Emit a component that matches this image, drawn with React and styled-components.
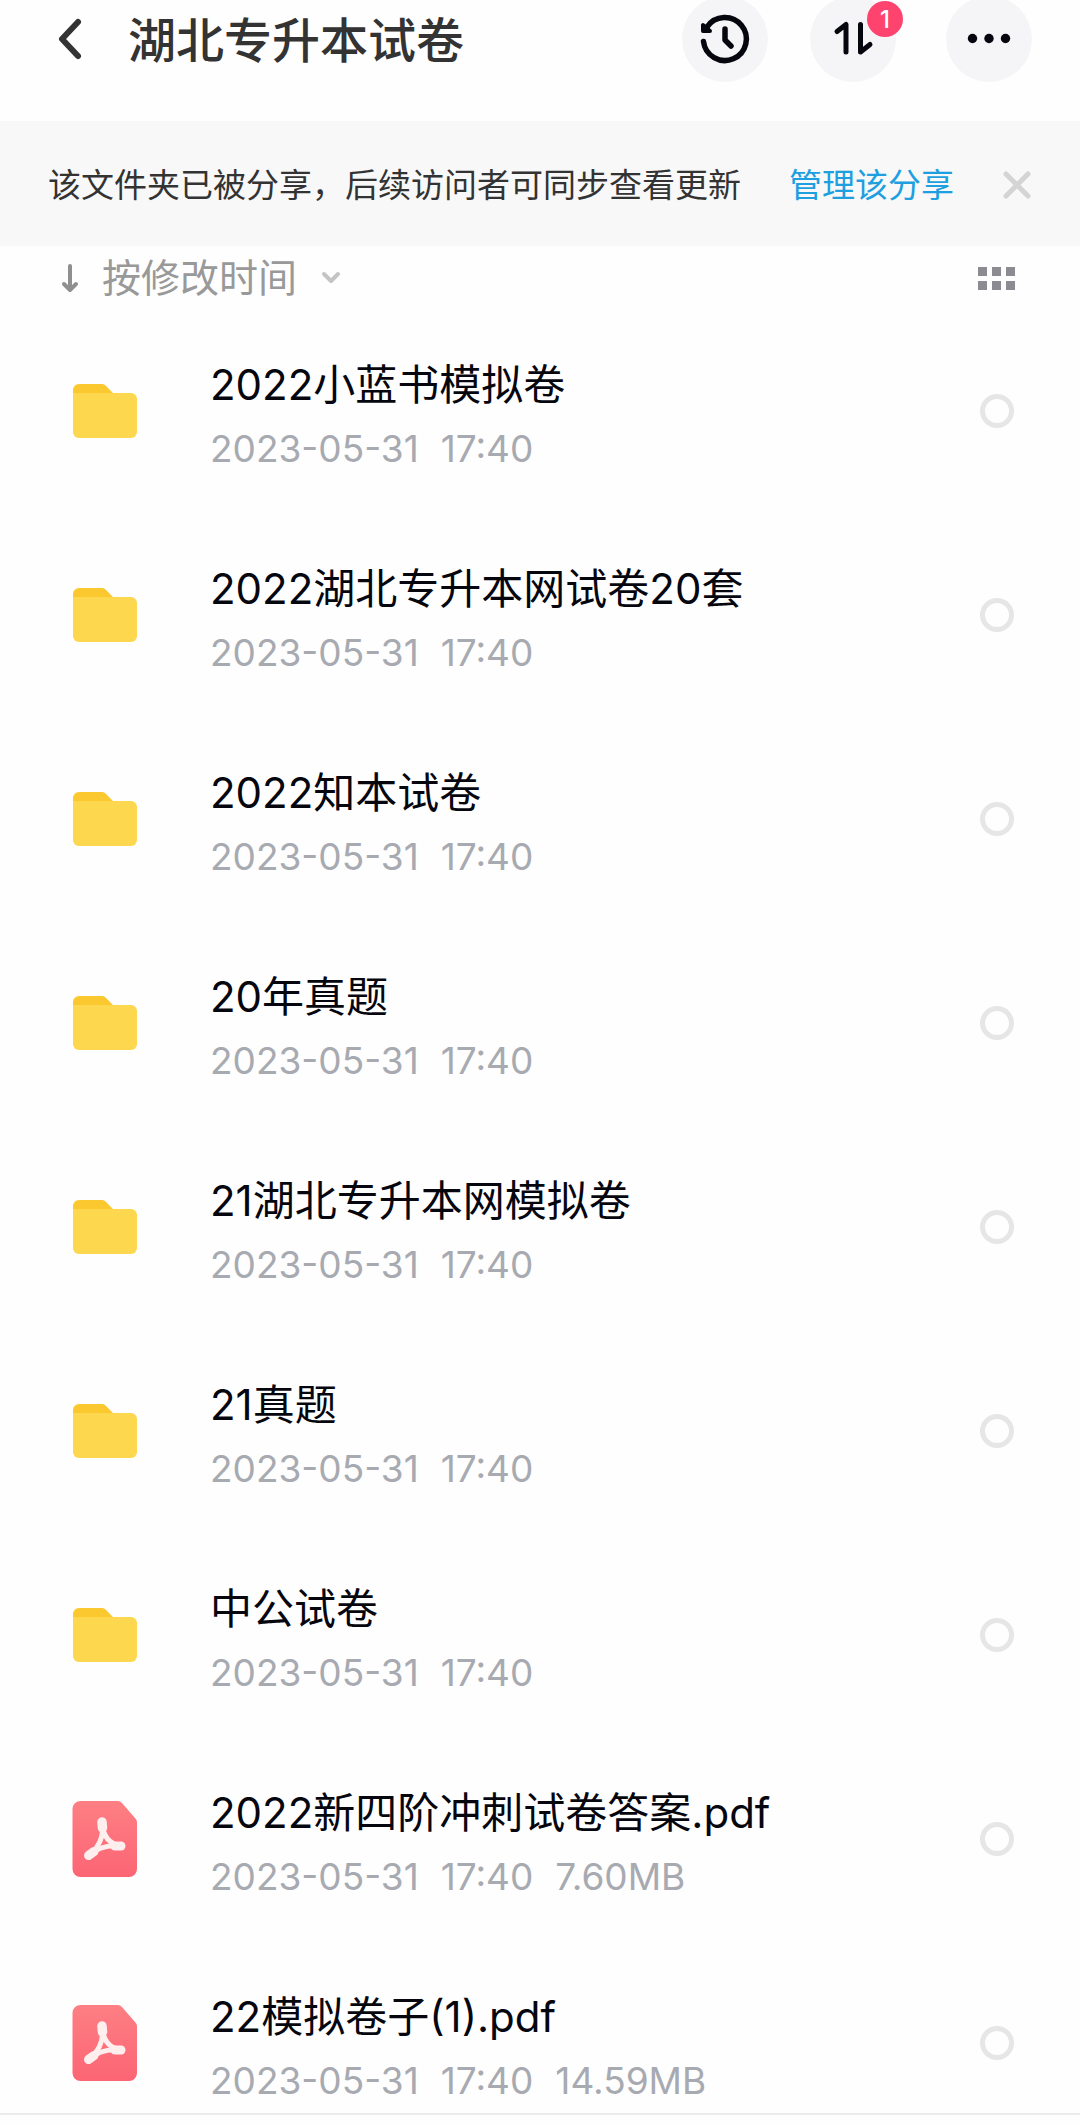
import React, { useState } from "react";
import styled, { createGlobalStyle } from "styled-components";

const files = [
  { id: 1, type: "folder", name: "2022小蓝书模拟卷", date: "2023-05-31", time: "17:40" },
  { id: 2, type: "folder", name: "2022湖北专升本网试卷20套", date: "2023-05-31", time: "17:40" },
  { id: 3, type: "folder", name: "2022知本试卷", date: "2023-05-31", time: "17:40" },
  { id: 4, type: "folder", name: "20年真题", date: "2023-05-31", time: "17:40" },
  { id: 5, type: "folder", name: "21湖北专升本网模拟卷", date: "2023-05-31", time: "17:40" },
  { id: 6, type: "folder", name: "21真题", date: "2023-05-31", time: "17:40" },
  { id: 7, type: "folder", name: "中公试卷", date: "2023-05-31", time: "17:40" },
  { id: 8, type: "pdf", name: "2022新四阶冲刺试卷答案.pdf", date: "2023-05-31", time: "17:40", size: "7.60MB" },
  { id: 9, type: "pdf", name: "22模拟卷子(1).pdf", date: "2023-05-31", time: "17:40", size: "14.59MB" },
];

const GlobalStyle = createGlobalStyle`
  * {
    box-sizing: border-box;
  }

  body {
    margin: 0;
    background: #fefefe;
    font-family: Inter, "Noto Sans CJK SC", sans-serif;
  }

  button {
    padding: 0;
    border: 0;
    background: none;
    font: inherit;
    color: inherit;
    cursor: pointer;
  }

  svg {
    display: block;
  }
`;

const Page = styled.div`
  overflow: hidden;
`;

const Header = styled.header`
  display: flex;
  align-items: center;
  margin-top: -4px;
  padding: 0 48px 39px 56px;
`;

const BackButton = styled.button`
  width: 28px;
  margin-right: 44px;
`;

const Title = styled.h1`
  flex: 1;
  margin: 0;
  padding-top: 4px;
  font-size: 48px;
  font-weight: 500;
  line-height: 60px;
  color: #333;
`;

const Actions = styled.div`
  display: flex;
  gap: 42px;
  margin-right: 50px;
`;

const RoundButton = styled.button`
  position: relative;
  width: 86px;
  height: 86px;
  border-radius: 50%;
  background: #f5f5f7;
  color: #06060f;
`;

const Badge = styled.span`
  position: absolute;
  top: 5px;
  right: -7px;
  width: 36px;
  height: 36px;
  border-radius: 50%;
  background: #ff436f;
  color: #fff;
  font-size: 24px;
  font-weight: 500;
  line-height: 38px;
  text-align: center;
`;

const Notice = styled.section`
  display: flex;
  align-items: center;
  height: 125px;
  padding: 2px 48px 0;
  background: #f8f8f8;
  font-size: 33px;
  line-height: 48px;
`;

const NoticeText = styled.p`
  margin: 0;
  color: #333;
`;

const NoticeLink = styled.a`
  flex: 1;
  margin-left: 48px;
  color: #1e9fdf;
  text-decoration: none;
`;

const SortBar = styled.div`
  display: flex;
  align-items: center;
  justify-content: space-between;
  height: 64px;
  padding: 0 65px 0 60px;
`;

const SortButton = styled.button`
  display: flex;
  align-items: center;
  color: #999;
  font-size: 39px;
  line-height: 48px;

  span {
    margin: 0 24px 0 22px;
  }
`;

const List = styled.ul`
  display: flex;
  flex-direction: column;
  gap: 64px;
  margin: 0;
  padding: 31px 66px 0 72px;
  border-bottom: 2px solid #ebebeb;
  list-style: none;
`;

const Row = styled.label`
  display: flex;
  align-items: center;
  height: 140px;
  cursor: pointer;
`;

const Info = styled.div`
  flex: 1;
  margin-left: 72px;
  padding-top: 12px;
`;

const Name = styled.div`
  color: #06060f;
  font-size: 42px;
  line-height: 64px;
`;

const Meta = styled.div`
  display: flex;
  gap: 22px;
  color: #a8aab1;
  font-size: 37px;
  line-height: 64px;
`;

const Check = styled.input`
  appearance: none;
  width: 34px;
  height: 34px;
  margin: 0;
  border: 5px solid #e6e6e6;
  border-radius: 50%;

  &:checked {
    border-color: #1e9fdf;
    background: #1e9fdf;
  }
`;

const FolderIcon = () => (
  <svg width="66" height="56" viewBox="0 0 66 56" aria-hidden="true">
    <path d="M1 7a6 6 0 0 1 6-6h22c4 0 5 2 7 4l5 5v12H1Z" fill="#fbc82f" />
    <path d="M1 10h58a6 6 0 0 1 6 6v33a6 6 0 0 1-6 6H7a6 6 0 0 1-6-6Z" fill="#fdd84e" />
  </svg>
);

const PdfIcon = () => (
  <svg width="66" height="76" viewBox="0 0 66 76" aria-hidden="true">
    <defs>
      <linearGradient id="pdf" x1="0" y1="0" x2="0" y2="1">
        <stop offset="0" stopColor="#fd7f84" />
        <stop offset="1" stopColor="#fc6574" />
      </linearGradient>
    </defs>
    <path d="M8 0h38q2 0 4 2l13 15q2 2 2 4v47a8 8 0 0 1-8 8H8.500a8 8 0 0 1-8-8V8a8 8 0 0 1 8-8Z" fill="url(#pdf)" />
    <g fill="none" stroke="#ffeeee" strokeLinecap="round" strokeLinejoin="round">
      <path d="M30 22C32 33 29 44 17 55" strokeWidth="5" />
      <path d="M30 22C31 34 36 43 49 45" strokeWidth="5" />
      <path d="M17 55C25 46 36 44 49 45" strokeWidth="5" />
      <path d="M30 21l.5 6" strokeWidth="9.500" />
      <path d="M16.500 54.500l5.500-4" strokeWidth="9" />
      <path d="M43 45h6" strokeWidth="9" />
    </g>
  </svg>
);

const App = () => {
  const [selected, setSelected] = useState([]);
  const [showNotice, setShowNotice] = useState(true);

  const toggle = (id) => {
    setSelected((prev) =>
      prev.includes(id) ? prev.filter((v) => v !== id) : [...prev, id]
    );
  };

  return (
    <Page>
      <GlobalStyle />
      <Header>
        <BackButton aria-label="返回">
          <svg width="28" height="44" viewBox="0 0 28 44" fill="none" stroke="#333" strokeWidth="6" strokeLinecap="round" strokeLinejoin="round">
            <path d="M22 5L6 22l16 17" />
          </svg>
        </BackButton>
        <Title>湖北专升本试卷</Title>
        <Actions>
          <RoundButton aria-label="历史">
            <svg width="86" height="86" viewBox="0 0 86 86" fill="none" stroke="currentColor" strokeWidth="5.500" strokeLinecap="round" strokeLinejoin="round">
              <path d="M21.500 45.500A21.500 21.500 0 1 0 25 31" />
              <path d="M43 33v11l6 6" />
              <path d="M21 29v6h7Z" fill="currentColor" strokeWidth="4" />
            </svg>
          </RoundButton>
          <RoundButton aria-label="传输列表">
            <svg width="86" height="86" viewBox="0 0 86 86" fill="none" stroke="currentColor" strokeWidth="5" strokeLinecap="round" strokeLinejoin="round">
              <path d="M27 35.500l9-7V56" />
              <path d="M50.500 28.500V56L60 48.500" />
            </svg>
            <Badge>1</Badge>
          </RoundButton>
        </Actions>
        <RoundButton aria-label="更多">
          <svg width="86" height="86" viewBox="0 0 86 86" fill="currentColor">
            <circle cx="26.500" cy="42.500" r="4.700" />
            <circle cx="43" cy="42.500" r="4.700" />
            <circle cx="59.500" cy="42.500" r="4.700" />
          </svg>
        </RoundButton>
      </Header>

      {showNotice && (
        <Notice>
          <NoticeText>该文件夹已被分享，后续访问者可同步查看更新</NoticeText>
          <NoticeLink href="#share">管理该分享</NoticeLink>
          <button aria-label="关闭" onClick={() => setShowNotice(false)}>
            <svg width="30" height="30" viewBox="0 0 30 30" stroke="#d4d4d4" strokeWidth="5" strokeLinecap="round">
              <path d="M4 4l22 22M26 4L4 26" />
            </svg>
          </button>
        </Notice>
      )}

      <SortBar>
        <SortButton>
          <svg width="20" height="32" viewBox="0 0 20 32" fill="none" stroke="#8f8f8f" strokeWidth="4" strokeLinecap="round" strokeLinejoin="round">
            <path d="M10 4v24M4 22l6 6 6-6" />
          </svg>
          <span>按修改时间</span>
          <svg width="20" height="14" viewBox="0 0 20 14" fill="none" stroke="#c4c4c4" strokeWidth="4" strokeLinecap="round" strokeLinejoin="round">
            <path d="M3 3l7 7 7-7" />
          </svg>
        </SortButton>
        <button aria-label="宫格视图">
          <svg width="37" height="23" viewBox="0 0 37 23" fill="#8c8b92">
            <path d="M0 0h9v9H0zM14 0h9v9h-9zM28 0h9v9h-9zM0 14h9v9H0zM14 14h9v9h-9zM28 14h9v9h-9z" />
          </svg>
        </button>
      </SortBar>

      <List>
        {files.map((file) => (
          <li key={file.id}>
            <Row>
              {file.type === "folder" ? <FolderIcon /> : <PdfIcon />}
              <Info>
                <Name>{file.name}</Name>
                <Meta>
                  <span>{file.date}</span>
                  <span>{file.time}</span>
                  {file.size && <span>{file.size}</span>}
                </Meta>
              </Info>
              <Check
                type="checkbox"
                checked={selected.includes(file.id)}
                onChange={() => toggle(file.id)}
              />
            </Row>
          </li>
        ))}
      </List>
    </Page>
  );
};

export default App;
